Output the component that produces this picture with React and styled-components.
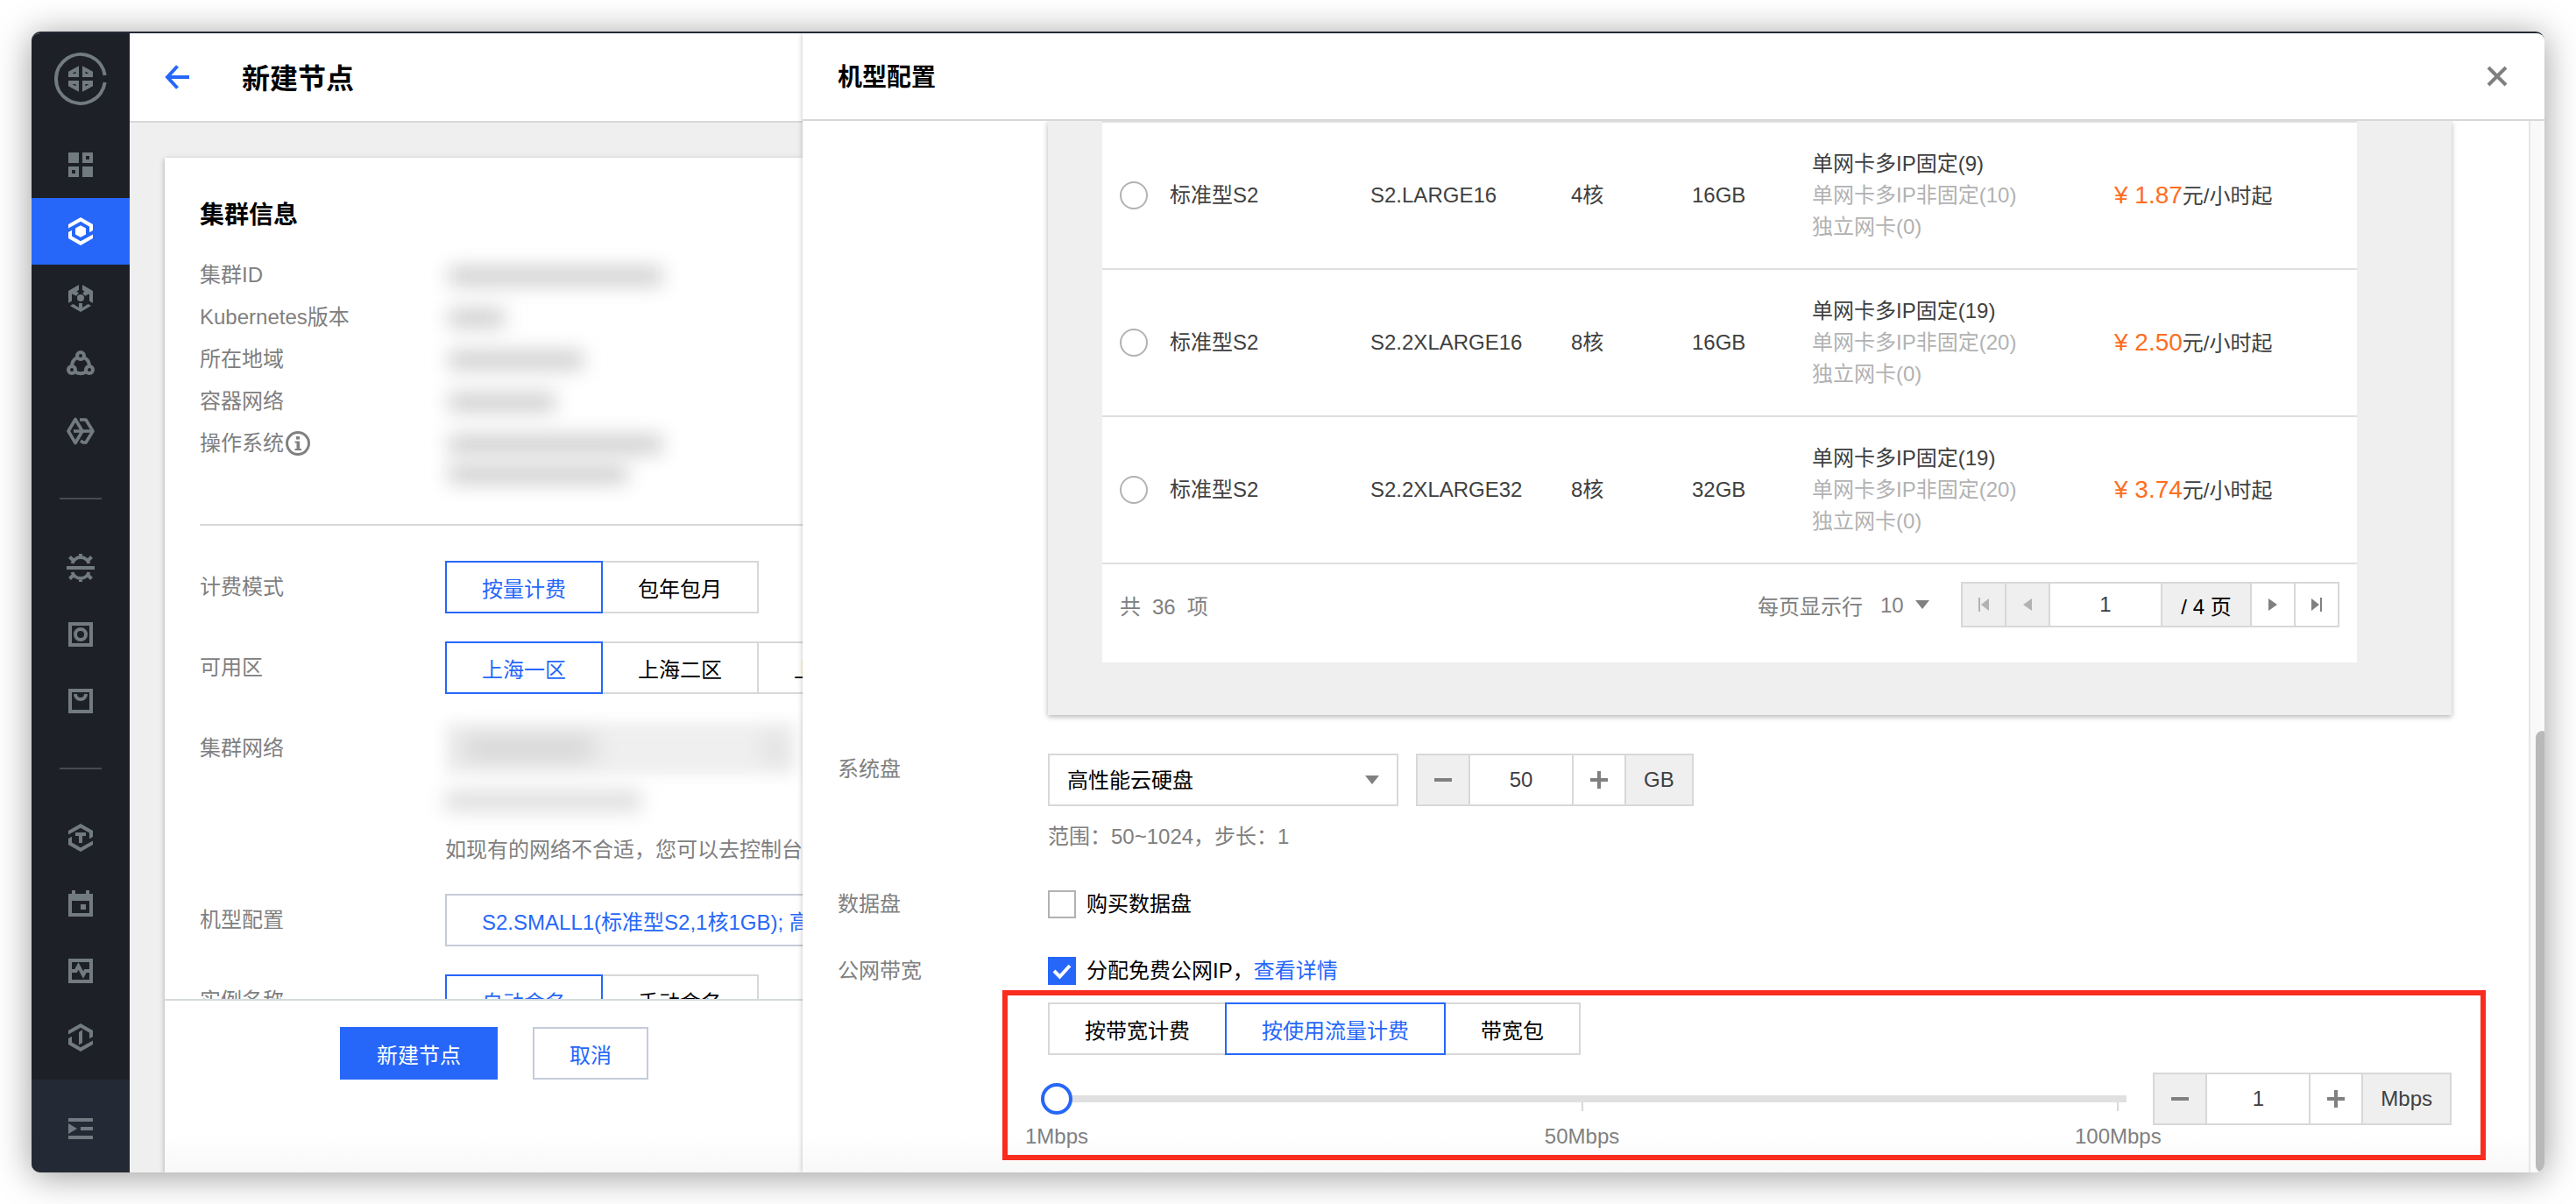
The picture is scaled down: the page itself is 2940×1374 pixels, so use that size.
import { useState } from 'react';
import styled, { createGlobalStyle, css } from 'styled-components';

const colors = {
  primary: '#2667fa',
  text: '#000',
  cell: '#404040',
  muted: '#808080',
  faint: '#b2b2b2',
  border: '#d8d8d8',
  line: '#dfdfdf',
  fill: '#efefef',
  price: '#ff6d1f',
  sidebar: '#1e2028',
  sidebarFoot: '#242a35',
  icon: '#727b82',
};

const GlobalStyle = createGlobalStyle`
  * {
    box-sizing: border-box;
  }
  body {
    margin: 0;
    background: #fff;
    overflow: hidden;
  }
  body, button, input, select {
    font-family: "Liberation Sans", "Noto Sans CJK SC", sans-serif;
    font-size: 24px;
  }
`;

const Page = styled.div`
  height: 100vh;
  padding: 36px;
`;

const Window = styled.div`
  display: grid;
  grid-template-columns: 112px minmax(0, 768fr) minmax(0, 1988fr);
  height: 100%;
  border-top: 2px solid ${colors.sidebarFoot};
  border-radius: 10px;
  overflow: hidden;
  box-shadow: 0 4px 40px rgba(0, 0, 0, 0.4);
`;

/* sidebar */

const Sidebar = styled.nav`
  display: flex;
  flex-direction: column;
  background: ${colors.sidebar};
`;

const Logo = styled.a`
  display: flex;
  justify-content: center;
  padding: 22px 0 30px;
  color: ${colors.icon};
`;

const SideLink = styled.a`
  display: flex;
  align-items: center;
  justify-content: center;
  height: 76px;
  color: ${props => (props.$active ? '#fff' : colors.icon)};
  background: ${props => (props.$active ? colors.primary : 'transparent')};
`;

const SideDivider = styled.hr`
  width: 48px;
  margin: 38px auto 40px;
  border: 0;
  border-top: 2px solid #484b54;
`;

const SideFoot = styled.button`
  display: flex;
  align-items: center;
  justify-content: center;
  height: 106px;
  margin-top: auto;
  padding: 6px 0 0;
  border: 0;
  color: ${colors.icon};
  background: ${colors.sidebarFoot};
`;

/* main pane */

const Main = styled.main`
  display: flex;
  flex-direction: column;
  min-height: 0;
  background: ${colors.fill};
`;

const MainHeader = styled.header`
  display: flex;
  align-items: center;
  gap: 60px;
  height: 102px;
  padding: 0 40px;
  background: #fff;
  border-bottom: 2px solid ${colors.border};
`;

const IconButton = styled.button`
  display: flex;
  padding: 0;
  border: 0;
  background: none;
  color: ${props => props.$color || colors.muted};
  cursor: pointer;
`;

const PageTitle = styled.h1`
  margin: 0;
  padding-top: 4px;
  font-size: 32px;
  line-height: 44px;
`;

const SectionTitle = styled.h2`
  margin: 0;
  padding-top: 4px;
  font-size: 28px;
  line-height: 44px;
`;

const Panel = styled.div`
  display: flex;
  flex: 1;
  flex-direction: column;
  min-height: 0;
  margin: 40px 0 0 40px;
  background: #fff;
  box-shadow: 0 2px 6px rgba(0, 0, 0, 0.3);
`;

const PanelBody = styled.div`
  flex: 1;
  min-height: 0;
  padding: 40px 0 0 40px;
  overflow: hidden;
  white-space: nowrap;
`;

const InfoList = styled.dl`
  margin: 22px 0 0;
  padding-bottom: 46px;
  border-bottom: 2px solid ${colors.border};
`;

const InfoRow = styled.div`
  display: grid;
  grid-template-columns: 280px 1fr;
  line-height: 48px;
`;

const InfoLabel = styled.dt`
  display: flex;
  align-items: center;
  gap: 2px;
  height: 48px;
  color: ${colors.muted};
`;

const InfoValue = styled.dd`
  display: flex;
  flex-direction: column;
  gap: 12px;
  margin: 0;
  padding: 14px 0 0 4px;
`;

/* values hidden from the reader */
const Masked = styled.span`
  display: block;
  width: ${props => props.$width}px;
  height: 22px;
  background: ${props => props.$tone || '#cfcfcf'};
  filter: blur(11px);
`;

const MainForm = styled.div`
  display: flex;
  flex-direction: column;
  gap: 32px;
  padding-top: 40px;
`;

const MainField = styled.div`
  display: grid;
  grid-template-columns: 280px 1fr;
`;

const MainLabel = styled.span`
  line-height: 60px;
  color: ${colors.muted};
`;

const Segmented = styled.div`
  display: flex;
`;

const Segment = styled.button`
  position: relative;
  flex: none;
  height: 60px;
  padding: 0 40px;
  border: 2px solid ${colors.border};
  background: #fff;
  color: ${colors.text};
  cursor: pointer;
  & + & {
    margin-left: -2px;
  }
  ${props =>
    props.$active &&
    css`
      z-index: 1;
      border-color: ${colors.primary};
      color: ${colors.primary};
    `}
`;

const MaskedSelect = styled.div`
  display: flex;
  align-items: center;
  justify-content: space-between;
  height: 60px;
  margin-right: 8px;
  padding: 0 16px 0 20px;
  background: #efefef;
  filter: blur(8px);
`;

const MaskedHint = styled.div`
  padding: 7px 0;
  margin-top: 12px;
`;

const MainHint = styled.p`
  margin: 20px 0 0;
  line-height: 36px;
  color: ${colors.muted};
`;

const ConfigButton = styled.button`
  height: 60px;
  padding: 0 40px;
  border: 2px solid #c5cbd9;
  background: #fff;
  color: ${colors.primary};
  text-align: left;
  white-space: nowrap;
`;

const PanelFooter = styled.footer`
  display: flex;
  flex: none;
  gap: 40px;
  height: 198px;
  padding: 30px 0 0 200px;
  border-top: 2px solid #d3dbdd;
  background: linear-gradient(to top, #f8f8f8, #fff 44px);
`;

const Button = styled.button`
  height: 60px;
  padding: 0 40px;
  border: 2px solid ${props => (props.$primary ? colors.primary : '#c5cbd9')};
  background: ${props => (props.$primary ? colors.primary : '#fff')};
  color: ${props => (props.$primary ? '#fff' : colors.primary)};
  cursor: pointer;
`;

/* drawer */

const Drawer = styled.aside`
  z-index: 1;
  display: flex;
  flex-direction: column;
  min-height: 0;
  background: #fff;
  box-shadow: 0 0 6px rgba(0, 0, 0, 0.25);
`;

const DrawerHeader = styled.header`
  display: flex;
  flex: none;
  align-items: center;
  justify-content: space-between;
  height: 100px;
  padding: 0 42px 0 40px;
  border-bottom: 2px solid ${colors.border};
`;

const DrawerBody = styled.div`
  display: flex;
  flex: 1;
  min-height: 0;
`;

const DrawerContent = styled.div`
  flex: 1;
  min-width: 0;
  padding: 0 88px 0 40px;
  background: linear-gradient(to top, #f8f8f8, #fff 44px);
`;

const ScrollTrack = styled.div`
  display: flex;
  flex: 0 0 18px;
  align-items: flex-end;
  justify-content: flex-end;
  border-left: 2px solid #e6e6e6;
  background: #f9f9f9;
`;

const ScrollThumb = styled.div`
  width: 10px;
  height: 42%;
  border-radius: 8px 2px 2px 8px;
  background: #b9b9b9;
`;

const TableBox = styled.section`
  margin-left: 240px;
  padding: 0 108px 60px 62px;
  background: ${colors.fill};
  box-shadow: 0 2px 6px rgba(0, 0, 0, 0.3);
  clip-path: inset(0 -10px -14px -10px);
`;

const Table = styled.table`
  width: 100%;
  table-layout: fixed;
  border-spacing: 0;
  background: #fff;
  color: ${colors.cell};
`;

const Row = styled.tr`
  height: 168px;
`;

const Cell = styled.td`
  width: ${props => (props.$width ? `${props.$width}px` : 'auto')};
  padding: 0 0 0 20px;
  border-top: 2px solid ${colors.line};
  line-height: 36px;
  white-space: nowrap;
`;

const Radio = styled.input`
  display: block;
  width: 32px;
  height: 32px;
  margin: 0;
  appearance: none;
  border: 2px solid ${colors.faint};
  border-radius: 50%;
  background: #fff;
  &:checked {
    border: 10px solid ${colors.primary};
  }
`;

const IpLine = styled.div`
  color: ${props => (props.$faint ? colors.faint : colors.cell)};
`;

const Price = styled.span`
  font-size: 28px;
  color: ${colors.price};
`;

const TableFooter = styled.div`
  display: flex;
  align-items: center;
  justify-content: space-between;
  padding: 20px 20px 40px;
  border-top: 2px solid ${colors.line};
  background: #fff;
  color: ${colors.muted};
`;

const Total = styled.div`
  display: flex;
  align-items: baseline;
  gap: 13px;
`;

const PagerTools = styled.div`
  display: flex;
  align-items: center;
`;

const PageSize = styled.label`
  display: flex;
  align-items: center;
  gap: 20px;
  margin-right: 36px;
`;

const SelectWrap = styled.span`
  position: relative;
  display: flex;
  align-items: center;
  width: ${props => props.$width}px;
  color: ${colors.muted};
  svg {
    position: absolute;
    right: ${props => props.$inset || 0}px;
    pointer-events: none;
  }
`;

const PlainSelect = styled.select`
  width: 100%;
  padding: 0;
  border: 0;
  appearance: none;
  background: none;
  color: ${colors.muted};
`;

const BoxSelect = styled.select`
  width: 100%;
  height: 60px;
  padding: 0 20px;
  border: 2px solid ${colors.border};
  border-radius: 0;
  appearance: none;
  background: #fff;
  color: ${colors.text};
`;

const Group = styled.div`
  display: flex;
  flex: none;
  height: ${props => props.$height}px;
  border: 2px solid ${colors.border};
  && > * + * {
    border-left: 2px solid ${colors.border};
  }
`;

const GroupButton = styled.button`
  display: flex;
  align-items: center;
  justify-content: center;
  width: ${props => props.$width}px;
  padding: 0;
  border: 0;
  background: ${props => (props.disabled ? colors.fill : '#fff')};
  color: ${props => (props.$faint ? colors.faint : colors.muted)};
`;

const GroupInput = styled.input`
  width: ${props => props.$width}px;
  padding: 0;
  border: 0;
  border-radius: 0;
  text-align: center;
  color: ${colors.cell};
`;

const GroupText = styled.span`
  display: flex;
  align-items: center;
  justify-content: center;
  min-width: ${props => props.$width || 76}px;
  padding: 0 20px;
  background: ${colors.fill};
  color: ${props => props.$color || colors.cell};
  white-space: nowrap;
`;

const DrawerForm = styled.div`
  display: flex;
  flex-direction: column;
  gap: 40px;
  padding-top: 44px;
`;

const Field = styled.div`
  display: grid;
  grid-template-columns: 240px minmax(0, 1fr);
  line-height: 36px;
`;

const FieldLabel = styled.span`
  color: ${colors.muted};
`;

const ControlRow = styled.div`
  display: flex;
  gap: 20px;
`;

const Hint = styled.p`
  margin: 16px 0 0;
  line-height: 38px;
  color: ${colors.muted};
`;

const CheckLine = styled.div`
  display: flex;
  align-items: center;
  height: 36px;
`;

const CheckLabel = styled.label`
  display: flex;
  align-items: center;
  gap: 12px;
`;

const CheckMark = styled.span`
  display: flex;
  svg {
    position: absolute;
    pointer-events: none;
  }
`;

const Checkbox = styled.input`
  width: 32px;
  height: 32px;
  margin: 0;
  appearance: none;
  border: 2px solid ${colors.faint};
  background: #fff;
  &:checked {
    border-color: ${colors.primary};
    background: ${colors.primary};
  }
`;

const TextLink = styled.a`
  color: ${colors.primary};
  text-decoration: none;
`;

const Bandwidth = styled.div`
  position: relative;
  display: flex;
  flex-direction: column;
  gap: 20px;
  margin-top: 18px;
`;

const Highlight = styled.div`
  position: absolute;
  inset: -14px -39px -12px -52px;
  border: 6px solid #f92c20;
  pointer-events: none;
`;

const SliderRow = styled.div`
  display: flex;
  align-items: flex-start;
  gap: 30px;
  margin-left: -8px;
`;

const Slider = styled.div`
  flex: 1;
  padding-top: 12px;
`;

const Range = styled.input`
  position: relative;
  z-index: 1;
  display: block;
  width: 100%;
  height: 36px;
  margin: 0;
  appearance: none;
  background: none;
  &::-webkit-slider-runnable-track {
    height: 8px;
    background: #e0e0e0;
  }
  &::-webkit-slider-thumb {
    width: 36px;
    height: 36px;
    margin-top: -14px;
    appearance: none;
    border: 4px solid ${colors.primary};
    border-radius: 50%;
    background: #fff;
  }
`;

const Marks = styled.div`
  display: grid;
  grid-template-columns: 49fr 50fr 0;
  margin: -14px 10px 0 18px;
`;

const Mark = styled.div`
  display: flex;
  flex-direction: column;
  align-items: center;
  width: 0;
  line-height: 30px;
  color: ${colors.muted};
  white-space: nowrap;
  &::before {
    content: '';
    width: 2px;
    height: 10px;
    margin-bottom: 14px;
    background: ${colors.border};
  }
`;

/* icons */

const Icon = ({ size = 32, children }) => (
  <svg width={size} height={size} viewBox={`0 0 ${size} ${size}`} fill='currentColor' aria-hidden='true'>
    {children}
  </svg>
);

const line = { fill: 'none', stroke: 'currentColor', strokeWidth: 4 };

const HexFrame = () => (
  <>
    <path d='M2 12.5V8L16 0l14 8v7l-4 2.3v-6.8L16 4.8z' />
    <path d='M30 19.5V24l-14 8-14-8v-7l4-2.3v6.8l10 5.7z' />
  </>
);

const LogoIcon = () => (
  <Icon size={60}>
    <path d='M57.7 34A28 28 0 1 1 57.7 26' {...line} />
    <g fillRule='evenodd'>
      <path d='M28 15.3V28H16v-6.3zM24.5 21.6L20.5 24h4z' />
      <path d='M32 15.3V28h12v-6.3zM35.5 21.6l4 2.4h-4z' />
      <path d='M28 44.7V32H16v6.3zM24.5 38.4L20.5 36h4z' />
      <path d='M32 44.7V32h12v6.3zM35.5 38.4l4-2.4h-4z' />
    </g>
  </Icon>
);

const sideIcons = {
  overview: (
    <path
      fillRule='evenodd'
      d='M2 2h12v12H2zM18 2h12v12H18zM22 6v4h4V6zM2 18h12v12H2zM6 22v4h4v-4zM18 18h12v12H18z'
    />
  ),
  cluster: (
    <>
      <HexFrame />
      <path d='M16 9.3l6 3.3v6.8l-6 3.3-6-3.3v-6.8z' />
    </>
  ),
  elastic: (
    <>
      <path d='M14 1v6l-2.6 1.5 2.4 2-2.8 3.3L7.5 12 6 11.5v8l-4 2.3V8z' />
      <path d='M18 1v6l2.6 1.5-2.4 2 2.8 3.3 3.5-1.8 1.5-.5v8l4 2.3V8z' />
      <circle cx='16' cy='16' r='4' />
      <path d='M14 22h4v5l6.5-4 3.5 2-12 7-12-7 3.5-2 6.5 4z' />
    </>
  ),
  mesh: (
    <g {...line}>
      <circle cx='16' cy='6' r='4' />
      <circle cx='6' cy='22' r='4' />
      <circle cx='26' cy='22' r='4' />
      <path d='M6 18C6 13.5 8 10 12 8M26 18c0-4.500-2-8-6-10M10 24.500c3.500 2 8.500 2 12 0' />
    </g>
  ),
  edge: (
    <g {...line} strokeWidth={3.6} strokeLinejoin='round'>
      <path d='M10 2.500L2 16l8 13.500L18 16z' />
      <path d='M8 16h22' />
      <path d='M15 3h7l8 13-8 13h-3l-3-2' />
    </g>
  ),
  ops: (
    <g {...line}>
      <path d='M0 16h32' />
      <path d='M6.500 11a10 10 0 0 1 19 0M16 0v4M3.500 3.500L8 8M28.500 3.500L24 8' />
      <path d='M6.500 21a10 10 0 0 0 19 0M16 32v-4M3.500 28.500L8 24M28.500 28.500L24 24' />
    </g>
  ),
  image: (
    <g {...line}>
      <path d='M4 4h24v24H4z' />
      <circle cx='16' cy='16' r='6' />
    </g>
  ),
  market: <path d='M4 4h24v24H4zM10 8a6 6 0 0 0 12 0' {...line} />,
  template: (
    <>
      <HexFrame />
      <path d='M10 10h12v4h-4v8h-4v-8h-4z' />
    </>
  ),
  calendar: (
    <path fillRule='evenodd' d='M6 0h4v4h12V0h4v4h4v26H2V4h4zM6 12v14h20V12zM16 16h6v6h-6z' />
  ),
  monitor: <path d='M4 4h24v24H4zM4 16h6.500l3-5.500 5.500 10 2.500-4.500H28' {...line} />,
  alarm: (
    <>
      <HexFrame />
      <path d='M14 10l4-2.700v14.700l-4 2.600z' />
    </>
  ),
};

const Caret = () => (
  <svg width='16' height='10' viewBox='0 0 16 10' fill='currentColor' aria-hidden='true'>
    <path d='M0 0h16L8 10z' />
  </svg>
);

const Minus = () => (
  <Icon size={20}>
    <path d='M0 8h20v4H0z' />
  </Icon>
);

const Plus = () => (
  <Icon size={20}>
    <path d='M0 8h20v4H0zM8 0h4v20H8z' />
  </Icon>
);

const InfoIcon = () => (
  <Icon size={28}>
    <circle cx='14' cy='14' r='12.500' fill='none' stroke='currentColor' strokeWidth='3' />
    <path d='M12 6h4v3.500h-4zM10.500 11.500H16V20h2v2h-7.500v-2h2v-6.500h-2z' />
  </Icon>
);

/* data */

const sideGroups = [
  ['overview', 'cluster', 'elastic', 'mesh', 'edge'],
  ['ops', 'image', 'market'],
  ['template', 'calendar', 'monitor', 'alarm'],
];

const clusterInfo = [
  { label: '集群ID', widths: [244] },
  { label: 'Kubernetes版本', widths: [64] },
  { label: '所在地域', widths: [154] },
  { label: '容器网络', widths: [122] },
  { label: '操作系统', widths: [244, 204], info: true },
];

const machines = [
  { model: 'S2.LARGE16', cpu: '4核', memory: '16GB', fixed: 9, floating: 10, price: '1.87' },
  { model: 'S2.2XLARGE16', cpu: '8核', memory: '16GB', fixed: 19, floating: 20, price: '2.50' },
  { model: 'S2.2XLARGE32', cpu: '8核', memory: '32GB', fixed: 19, floating: 20, price: '3.74' },
];

function Segments({ options, initial = 0 }) {
  const [selected, setSelected] = useState(initial);

  return (
    <Segmented>
      {options.map((option, i) => (
        <Segment
          key={option}
          type='button'
          aria-pressed={i === selected}
          $active={i === selected}
          onClick={() => setSelected(i)}
        >
          {option}
        </Segment>
      ))}
    </Segmented>
  );
}

function Stepper({ label, value, min, max, unit, onChange }) {
  const change = next => onChange(Math.min(max, Math.max(min, next)));

  return (
    <Group $height={60}>
      <GroupButton type='button' $width={58} aria-label='减少' disabled={value <= min} onClick={() => change(value - 1)}>
        <Minus />
      </GroupButton>
      <GroupInput
        $width={118}
        aria-label={label}
        value={value}
        onChange={e => change(Number(e.target.value) || min)}
      />
      <GroupButton type='button' $width={60} aria-label='增加' onClick={() => change(value + 1)}>
        <Plus />
      </GroupButton>
      <GroupText>{unit}</GroupText>
    </Group>
  );
}

function SideNav() {
  return (
    <Sidebar>
      <Logo href='#' aria-label='首页'>
        <LogoIcon />
      </Logo>
      {sideGroups.map((group, i) => (
        <div key={group[0]}>
          {i > 0 && <SideDivider />}
          {group.map(name => (
            <SideLink key={name} href={`#${name}`} aria-label={name} $active={name === 'cluster'}>
              <Icon>{sideIcons[name]}</Icon>
            </SideLink>
          ))}
        </div>
      ))}
      <SideFoot type='button' aria-label='展开菜单'>
        <Icon>
          <path d='M2 4h28v4H2zM2 10l10 6-10 6zM16 14h14v4H16zM2 24h28v4H2z' />
        </Icon>
      </SideFoot>
    </Sidebar>
  );
}

function CreateNode() {
  return (
    <Main>
      <MainHeader>
        <IconButton type='button' aria-label='返回' $color={colors.primary}>
          <Icon size={28}>
            <path d='M14.500 1.500L3 14l11.500 12.500M3 14h25' {...line} />
          </Icon>
        </IconButton>
        <PageTitle>新建节点</PageTitle>
      </MainHeader>
      <Panel>
        <PanelBody>
          <SectionTitle>集群信息</SectionTitle>
          <InfoList>
            {clusterInfo.map(({ label, widths, info }) => (
              <InfoRow key={label}>
                <InfoLabel>
                  {label}
                  {info && <InfoIcon />}
                </InfoLabel>
                <InfoValue>
                  {widths.map(width => (
                    <Masked key={width} $width={width} />
                  ))}
                </InfoValue>
              </InfoRow>
            ))}
          </InfoList>
          <MainForm>
            <MainField>
              <MainLabel>计费模式</MainLabel>
              <Segments options={['按量计费', '包年包月']} />
            </MainField>
            <MainField>
              <MainLabel>可用区</MainLabel>
              <Segments options={['上海一区', '上海二区', '上海三区']} />
            </MainField>
            <MainField>
              <MainLabel>集群网络</MainLabel>
              <div>
                <MaskedSelect>
                  <Masked $width={150} />
                  <Masked $width={16} />
                </MaskedSelect>
                <MaskedHint>
                  <Masked $width={224} $tone='#dcdcdc' />
                </MaskedHint>
                <MainHint>如现有的网络不合适，您可以去控制台</MainHint>
              </div>
            </MainField>
            <MainField>
              <MainLabel>机型配置</MainLabel>
              <ConfigButton type='button'>S2.SMALL1(标准型S2,1核1GB); 高</ConfigButton>
            </MainField>
            <MainField>
              <MainLabel>实例名称</MainLabel>
              <Segments options={['自动命名', '手动命名']} />
            </MainField>
          </MainForm>
        </PanelBody>
        <PanelFooter>
          <Button type='button' $primary>
            新建节点
          </Button>
          <Button type='button'>取消</Button>
        </PanelFooter>
      </Panel>
    </Main>
  );
}

function MachineTable() {
  return (
    <TableBox>
      <Table aria-label='机型'>
        <tbody>
          {machines.map(machine => (
            <Row key={machine.model}>
              <Cell $width={57}>
                <Radio type='radio' name='machine' aria-label={machine.model} />
              </Cell>
              <Cell $width={229}>标准型S2</Cell>
              <Cell $width={229}>{machine.model}</Cell>
              <Cell $width={138}>{machine.cpu}</Cell>
              <Cell $width={137}>{machine.memory}</Cell>
              <Cell $width={345}>
                <IpLine>单网卡多IP固定({machine.fixed})</IpLine>
                <IpLine $faint>单网卡多IP非固定({machine.floating})</IpLine>
                <IpLine $faint>独立网卡(0)</IpLine>
              </Cell>
              <Cell>
                <Price>¥ {machine.price}</Price>元/小时起
              </Cell>
            </Row>
          ))}
        </tbody>
      </Table>
      <TableFooter>
        <Total>
          <span>共</span>
          <span>36</span>
          <span>项</span>
        </Total>
        <PagerTools>
          <PageSize>
            每页显示行
            <SelectWrap $width={56}>
              <PlainSelect defaultValue='10'>
                <option>10</option>
                <option>20</option>
                <option>50</option>
              </PlainSelect>
              <Caret />
            </SelectWrap>
          </PageSize>
          <Group $height={52}>
            <GroupButton type='button' $width={48} $faint disabled aria-label='第一页'>
              <Icon size={16}>
                <path d='M2 0h2v16H2zM14 1v14L5 8z' />
              </Icon>
            </GroupButton>
            <GroupButton type='button' $width={50} $faint disabled aria-label='上一页'>
              <Icon size={16}>
                <path d='M13 1v14L3 8z' />
              </Icon>
            </GroupButton>
            <GroupInput $width={128} aria-label='页码' defaultValue='1' />
            <GroupText $width={102} $color={colors.text}>
              / 4 页
            </GroupText>
            <GroupButton type='button' $width={50} aria-label='下一页'>
              <Icon size={16}>
                <path d='M3 1v14l10-7z' />
              </Icon>
            </GroupButton>
            <GroupButton type='button' $width={50} aria-label='最后一页'>
              <Icon size={16}>
                <path d='M12 0h2v16h-2zM2 1v14l9-7z' />
              </Icon>
            </GroupButton>
          </Group>
        </PagerTools>
      </TableFooter>
    </TableBox>
  );
}

function MachineDrawer() {
  const [disk, setDisk] = useState(50);
  const [bandwidth, setBandwidth] = useState(1);

  return (
    <Drawer>
      <DrawerHeader>
        <SectionTitle>机型配置</SectionTitle>
        <IconButton type='button' aria-label='关闭'>
          <Icon size={24}>
            <path d='M2 2l20 20M22 2L2 22' {...line} />
          </Icon>
        </IconButton>
      </DrawerHeader>
      <DrawerBody>
        <DrawerContent>
          <MachineTable />
          <DrawerForm>
            <Field>
              <FieldLabel as='label' htmlFor='disk-type'>
                系统盘
              </FieldLabel>
              <div>
                <ControlRow>
                  <SelectWrap $width={400} $inset={22}>
                    <BoxSelect id='disk-type'>
                      <option>高性能云硬盘</option>
                    </BoxSelect>
                    <Caret />
                  </SelectWrap>
                  <Stepper label='系统盘大小' value={disk} min={50} max={1024} unit='GB' onChange={setDisk} />
                </ControlRow>
                <Hint>范围：50~1024，步长：1</Hint>
              </div>
            </Field>
            <Field>
              <FieldLabel>数据盘</FieldLabel>
              <CheckLine>
                <CheckLabel>
                  <Checkbox type='checkbox' />
                  购买数据盘
                </CheckLabel>
              </CheckLine>
            </Field>
            <Field>
              <FieldLabel>公网带宽</FieldLabel>
              <div>
                <CheckLine>
                  <CheckLabel>
                    <CheckMark>
                      <Checkbox type='checkbox' defaultChecked />
                      <Icon>
                        <path d='M7 16l6.500 6.500L25 10' {...line} stroke='#fff' />
                      </Icon>
                    </CheckMark>
                    分配免费公网IP，
                  </CheckLabel>
                  <TextLink href='#detail'>查看详情</TextLink>
                </CheckLine>
                <Bandwidth>
                  <Segments options={['按带宽计费', '按使用流量计费', '带宽包']} initial={1} />
                  <SliderRow>
                    <Slider>
                      <Range
                        type='range'
                        aria-label='带宽上限'
                        min='1'
                        max='100'
                        value={bandwidth}
                        onChange={e => setBandwidth(Number(e.target.value))}
                      />
                      <Marks>
                        <Mark>1Mbps</Mark>
                        <Mark>50Mbps</Mark>
                        <Mark>100Mbps</Mark>
                      </Marks>
                    </Slider>
                    <Stepper label='带宽' value={bandwidth} min={1} max={100} unit='Mbps' onChange={setBandwidth} />
                  </SliderRow>
                  <Highlight />
                </Bandwidth>
              </div>
            </Field>
          </DrawerForm>
        </DrawerContent>
        <ScrollTrack>
          <ScrollThumb />
        </ScrollTrack>
      </DrawerBody>
    </Drawer>
  );
}

function App() {
  return (
    <>
      <GlobalStyle />
      <Page>
        <Window>
          <SideNav />
          <CreateNode />
          <MachineDrawer />
        </Window>
      </Page>
    </>
  );
}

export default App;
